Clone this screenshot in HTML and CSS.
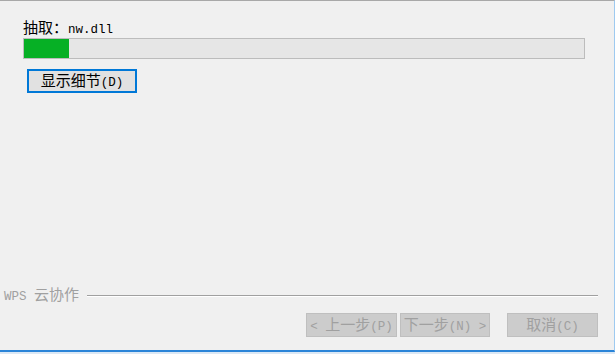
FILE: index.html
```html
<!DOCTYPE html>
<html lang="zh-CN">
<head>
<meta charset="utf-8">
<title>WPS 安装</title>
<link rel="stylesheet" href="styles.css">
</head>
<body>
<div class="window">
  <div class="main">
    <div class="label">抽取：<span class="mono">nw.dll</span></div>
    <div class="progress"><div class="fill" style="width:45px"></div></div>
    <button class="btn details"><span class="cap">显示细节<span class="mono">(D)</span></span></button>
  </div>
  <div class="footer">
    <div class="group">
      <span class="group-text"><span class="mono">WPS </span>云协作</span>
      <span class="group-line"></span>
    </div>
    <div class="buttons">
      <button class="btn nav back"><span class="cap"><span class="mono">&lt; </span>上一步<span class="mono">(P)</span></span></button>
      <button class="btn nav next"><span class="cap">下一步<span class="mono">(N) &gt;</span></span></button>
      <button class="btn nav cancel"><span class="cap">取消<span class="mono">(C)</span></span></button>
    </div>
  </div>
</div>
</body>
</html>
```

FILE: styles.css
```css
html, body {
  margin: 0;
  padding: 0;
}
body {
  background: #dbe8f5;
  width: 615px;
  height: 354px;
  overflow: hidden;
  font-family: "Noto Sans CJK SC", "Noto Sans", sans-serif;
  font-size: 15px;
  color: #000;
}
.window {
  box-sizing: border-box;
  width: 615px;
  height: 352px;
  background: #f0f0f0;
  border-top: 1px solid #a8a8a8;
  border-right: 1px solid #9ecaf0;
  border-bottom: 2px solid #2a84d8;
  display: flex;
  flex-direction: column;
}
.mono {
  font-family: "Liberation Mono", monospace;
  font-size: 12.5px;
  white-space: pre;
}
.main {
  flex: 1;
  padding: 18px 0 0 23px;
  display: flex;
  flex-direction: column;
  align-items: flex-start;
}
.label {
  height: 15px;
  line-height: 15px;
  white-space: nowrap;
}
.progress {
  box-sizing: border-box;
  margin-top: 4px;
  width: 562px;
  height: 21px;
  border: 1px solid #bcbcbc;
  background: #e6e6e6;
}
.fill {
  height: 100%;
  background: #06b025;
}
.btn {
  box-sizing: border-box;
  font-family: "Noto Sans CJK SC", "Noto Sans", sans-serif;
  font-size: 15px;
  line-height: 15px;
  padding: 0;
  margin: 0;
  display: flex;
  align-items: center;
  justify-content: center;
  white-space: nowrap;
}
.cap {
  display: block;
  line-height: 15px;
  white-space: pre;
}
.details {
  margin: 10px 0 0 4px;
  width: 110px;
  height: 24px;
  background: #e1e1e1;
  border: 2px solid #0078d7;
  color: #000;
}
.footer {
  padding: 0 16px 13px 4px;
  display: flex;
  flex-direction: column;
}
.group {
  display: flex;
  align-items: center;
  height: 15px;
  line-height: 15px;
}
.group-text {
  color: #a0a0a0;
  white-space: pre;
}
.group-line {
  flex: 1;
  margin-left: 8px;
  height: 1px;
  background: #a0a0a0;
  border-bottom: 1px solid #ffffff;
}
.buttons {
  margin-top: 10px;
  display: flex;
  justify-content: flex-end;
}
.nav {
  height: 24px;
  width: 91px;
  background: #cccccc;
  border: 1px solid #bfbfbf;
  color: #a0a0a0;
}
.next {
  width: 90px;
  margin-left: 3px;
}
.cancel {
  margin-left: 17px;
}
```
